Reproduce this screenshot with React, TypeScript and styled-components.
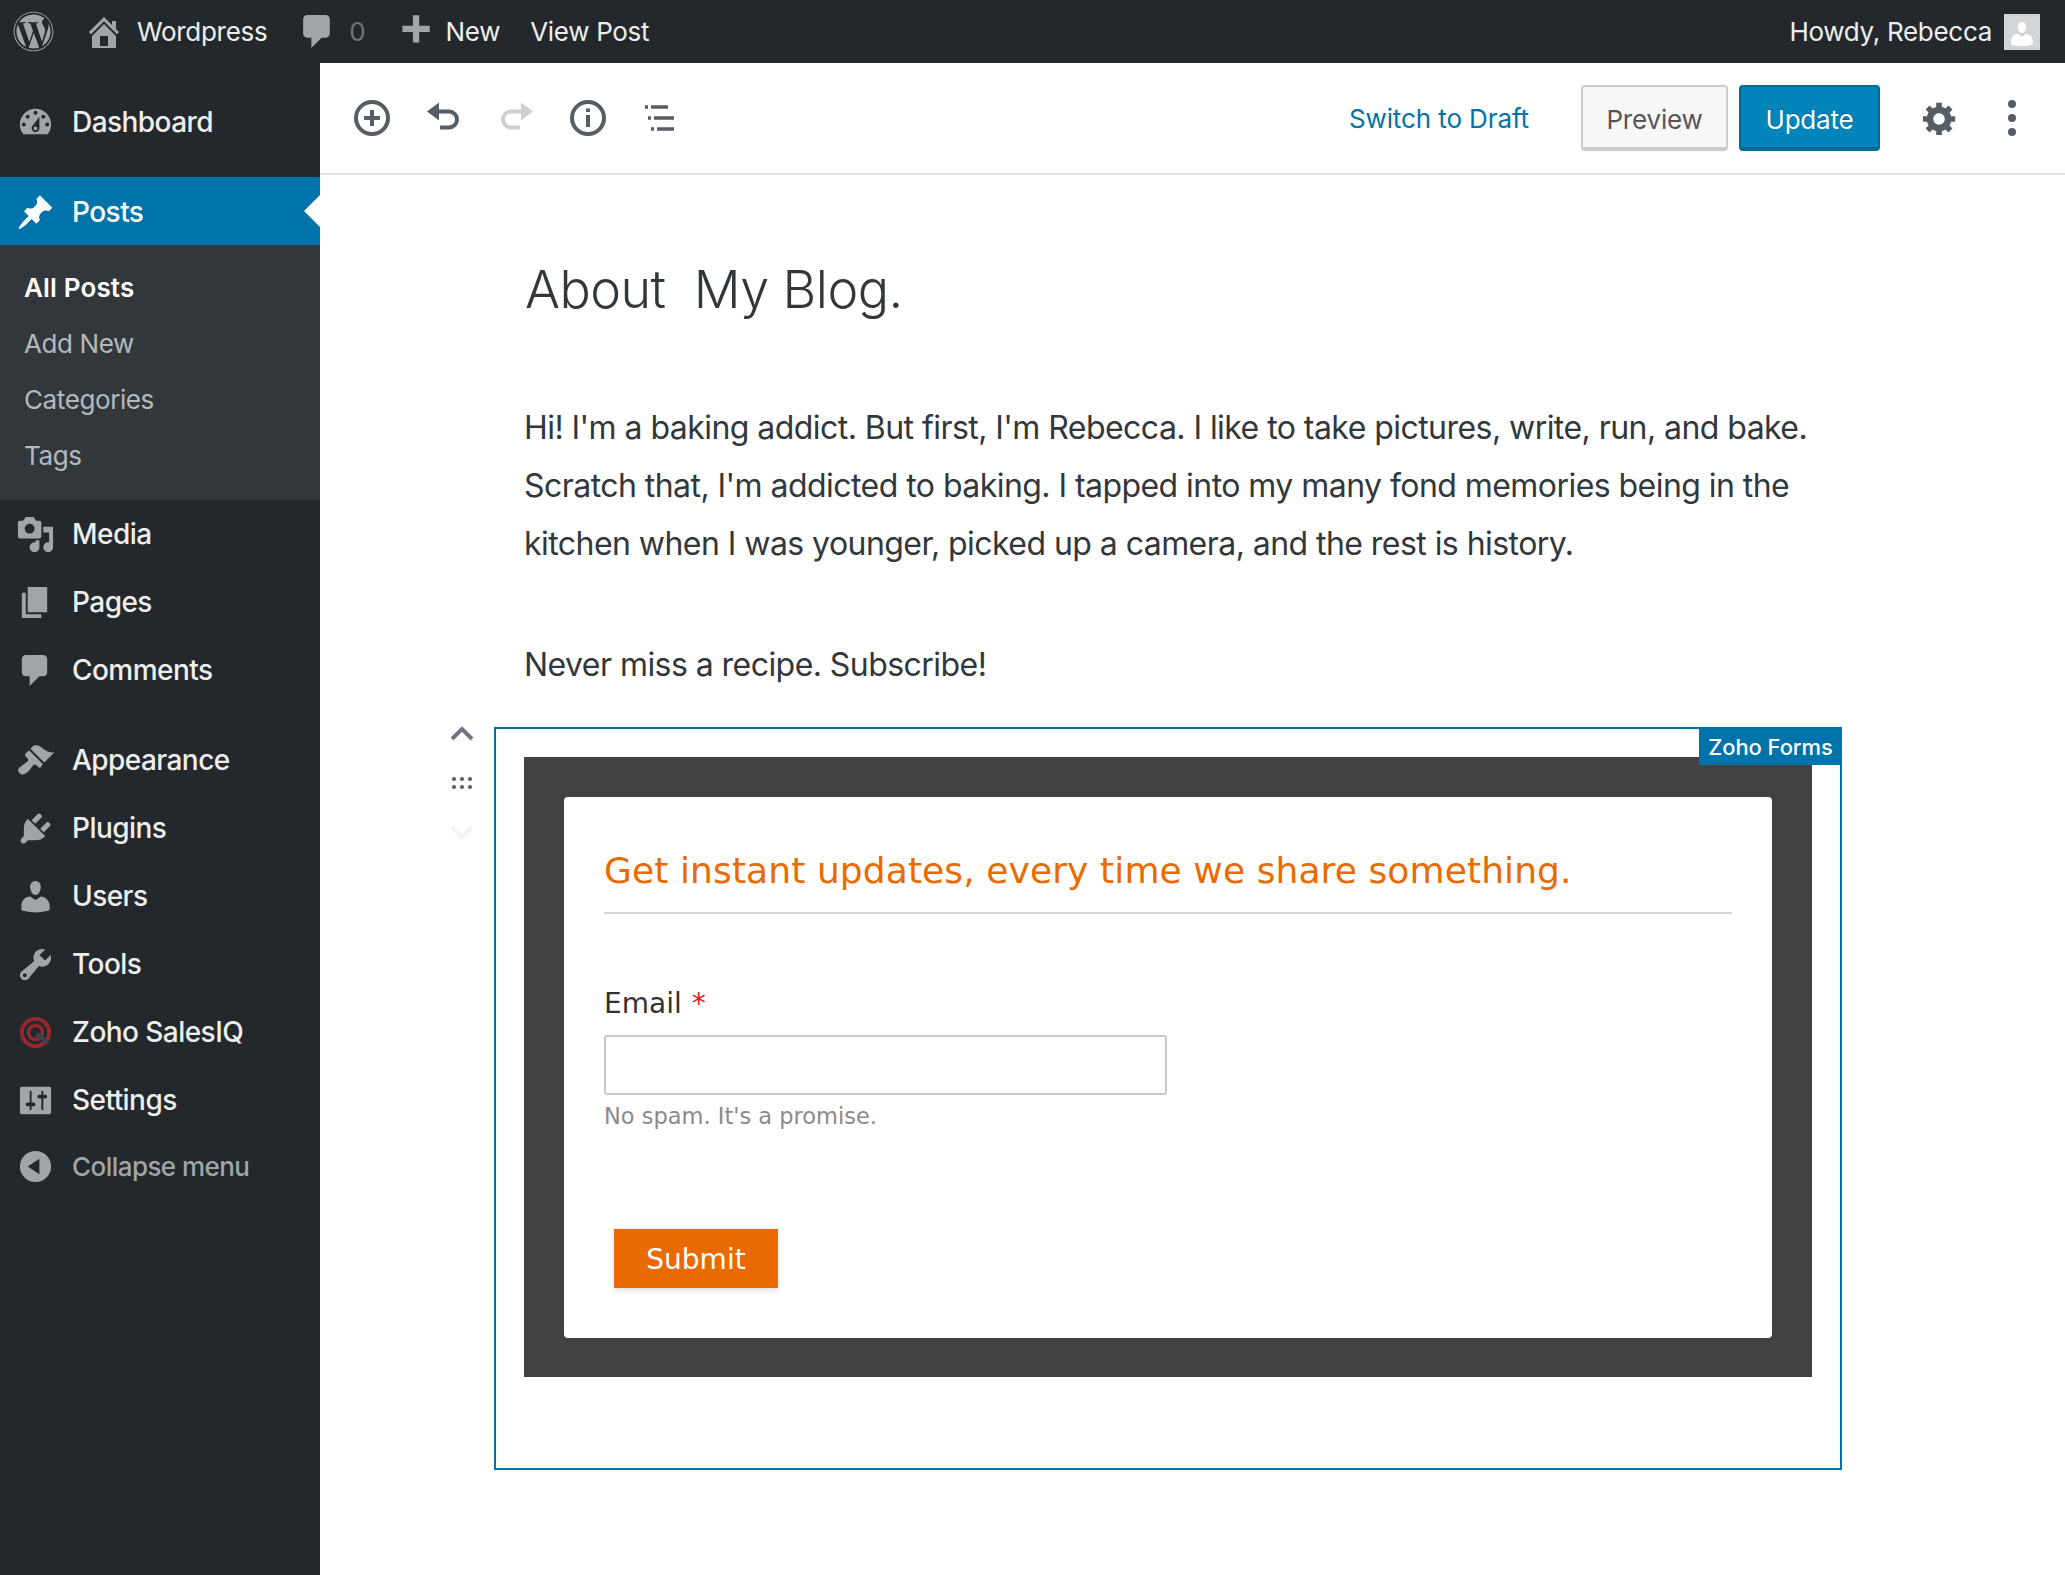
import React, { FC } from 'react';
import styled, { createGlobalStyle } from 'styled-components';
import { FaWordpress } from 'react-icons/fa';

const GlobalStyle = createGlobalStyle`
    html, body {
        margin: 0;
        padding: 0;
        background: #fff;
    }
    body {
        font-family: Inter, "Liberation Sans", sans-serif;
    }
    * {
        box-sizing: border-box;
    }
`;

const dashicons: Record<string, string> = {
    dashboard:
        'M3.76 16h12.48c1.1-1.37 1.76-3.11 1.76-5 0-4.42-3.58-8-8-8s-8 3.58-8 8c0 1.89.66 3.63 1.76 5zM10 4c.55 0 1 .45 1 1s-.45 1-1 1-1-.45-1-1 .45-1 1-1zM6 6c.55 0 1 .45 1 1s-.45 1-1 1-1-.45-1-1 .45-1 1-1zm8 0c.55 0 1 .45 1 1s-.45 1-1 1-1-.45-1-1 .45-1 1-1zm-5.37 5.55L12 7v6c0 1.1-.9 2-2 2s-2-.9-2-2c0-.57.24-1.08.63-1.45zM4 10c.55 0 1 .45 1 1s-.45 1-1 1-1-.45-1-1 .45-1 1-1zm12 0c.55 0 1 .45 1 1s-.45 1-1 1-1-.45-1-1 .45-1 1-1zm-5 3c0-.55-.45-1-1-1s-1 .45-1 1 .45 1 1 1 1-.45 1-1z',
    pin: 'M10.44 3.02l1.82-1.82 6.36 6.35-1.83 1.82c-1.05-.68-2.48-.57-3.41.36l-.75.75c-.92.93-1.04 2.35-.35 3.41l-1.83 1.82-2.41-2.41-2.8 2.79c-.42.42-3.38 2.71-3.8 2.29s1.86-3.39 2.28-3.81l2.79-2.79L4.1 9.36l1.83-1.82c1.05.69 2.48.57 3.4-.36l.75-.75c.93-.92 1.05-2.35.36-3.41z',
    media: 'M13 11V4c0-.55-.45-1-1-1h-1.67L9 1H5L3.67 3H2c-.55 0-1 .45-1 1v7c0 .55.45 1 1 1h10c.55 0 1-.45 1-1zM7 4.5c1.38 0 2.5 1.12 2.5 2.5S8.38 9.5 7 9.5 4.5 8.38 4.5 7 5.62 4.5 7 4.5zM14 6h5v10.5c0 1.38-1.12 2.5-2.5 2.5S14 17.88 14 16.5s1.12-2.5 2.5-2.5c.17 0 .34.02.5.05V9h-3V6zm-4 8.05V13h2v3.5c0 1.38-1.12 2.5-2.5 2.5S7 17.88 7 16.5 8.12 14 9.5 14c.17 0 .34.02.5.05z',
    page: 'M6 15V2h10v13H6zm-1 1h8v2H3V5h2v11z',
    comment: 'M5 2h9c1.1 0 2 .9 2 2v7c0 1.1-.9 2-2 2h-2l-5 5v-5H5c-1.1 0-2-.9-2-2V4c0-1.1.9-2 2-2z',
    appearance:
        'M14.48 11.06L7.41 3.99l1.5-1.5c.5-.56 2.3-.47 3.51.32 1.21.8 1.43 1.28 2.91 2.1 1.18.64 2.45 1.26 4.45.85zm-.71.71L6.7 4.7 4.93 6.47c-.39.39-.39 1.02 0 1.41l1.06 1.06c.39.39.39 1.03 0 1.42-.6.6-1.43 1.11-2.21 1.69-.35.26-.7.53-1.01.84C1.43 13.23.91 14.66 1.25 15.6c.2.55.9 1.27 1.45 1.45.93.34 2.37-.18 3.71-1.52.31-.31.58-.66.84-1.01.58-.78 1.09-1.61 1.69-2.21.39-.39 1.03-.39 1.42 0l1.06 1.06c.39.39 1.02.39 1.41 0z',
    plugin: 'M13.11 4.36L9.87 7.6 8 5.73l3.24-3.24c.35-.34 1.05-.2 1.56.32.52.51.66 1.21.31 1.55zm-8 1.77l.91-1.12 9.01 9.01-1.19.84c-.71.71-2.63 1.16-3.82 1.16H6.14L4.9 17.26c-.59.59-1.54.59-2.12 0-.59-.58-.59-1.53 0-2.12l1.24-1.24v-3.88c0-1.13.4-3.19 1.09-3.89zm7.26 3.97l3.24-3.24c.34-.35 1.04-.21 1.55.31.52.51.66 1.21.31 1.55l-3.24 3.25z',
    users: 'M10 9.25c-2.27 0-2.73-3.44-2.73-3.44C7 4.02 7.82 2 9.97 2c2.16 0 2.98 2.02 2.71 3.81 0 0-.41 3.44-2.68 3.44zm0 2.57L12.72 10c2.39 0 4.52 2.33 4.52 4.53v2.49s-3.65 1.13-7.24 1.13c-3.65 0-7.24-1.13-7.24-1.13v-2.49c0-2.25 1.94-4.48 4.47-4.48z',
    tools: 'M16.68 9.77c-1.34 1.34-3.3 1.67-4.95.99l-5.41 6.52c-.99.99-2.59.99-3.58 0s-.99-2.59 0-3.57l6.52-5.42c-.68-1.65-.35-3.61.99-4.95 1.28-1.28 3.12-1.62 4.72-1.06l-2.89 2.89 2.82 2.82 2.86-2.87c.53 1.58.18 3.39-1.08 4.67zM3.81 16.21c.4.39 1.04.39 1.43 0 .4-.4.4-1.04 0-1.43-.39-.4-1.03-.4-1.43 0-.39.39-.39 1.03 0 1.43z',
    settings:
        'M18 16V4c0-.55-.45-1-1-1H3c-.55 0-1 .45-1 1v12c0 .55.45 1 1 1h14c.55 0 1-.45 1-1zM8 11h1c.55 0 1 .45 1 1s-.45 1-1 1H8v1.5c0 .28-.22.5-.5.5s-.5-.22-.5-.5V13H6c-.55 0-1-.45-1-1s.45-1 1-1h1V5.5c0-.28.22-.5.5-.5s.5.22.5.5V11zm5-2h-1c-.55 0-1-.45-1-1s.45-1 1-1h1V5.5c0-.28.22-.5.5-.5s.5.22.5.5V7h1c.55 0 1 .45 1 1s-.45 1-1 1h-1v5.5c0 .28-.22.5-.5.5s-.5-.22-.5-.5V9z',
    collapse: 'M10 18a8 8 0 1 0 0-16 8 8 0 0 0 0 16zM12 6v8l-6-4z',
    home: 'M16 8.5l1.53 1.53-1.06 1.06L10 4.62l-6.47 6.47-1.06-1.06L10 2.5l4 4v-2h2v4zm-6-2.46l6 5.99V18H4v-5.97zM12 17v-5H8v5h4z',
    plus: 'M17 7v3h-5v5H9v-5H4V7h5V2h3v5h5z',
    gear: 'M18 12h-2.18c-.17.7-.44 1.35-.81 1.93l1.54 1.54-2.1 2.1-1.54-1.54c-.58.36-1.23.63-1.91.79V19H8v-2.18c-.68-.16-1.33-.43-1.91-.79l-1.54 1.54-2.12-2.12 1.54-1.54c-.36-.58-.63-1.23-.79-1.91H1V9.03h2.17c.16-.7.44-1.35.8-1.94L2.43 5.55l2.1-2.1 1.54 1.54c.58-.37 1.24-.64 1.93-.81V2h3v2.18c.68.16 1.33.43 1.91.79l1.54-1.54 2.12 2.12-1.54 1.54c.36.59.64 1.24.8 1.94H18V12zm-8.5 1.5c1.66 0 3-1.34 3-3s-1.34-3-3-3-3 1.34-3 3 1.34 3 3 3z',
};

const Dashicon: FC<{ name: string; size?: number; color?: string }> = ({ name, size = 39, color = 'currentColor' }) => (
    <svg width={size} height={size} viewBox="0 0 20 20" fill={color} style={{ flexShrink: 0 }}>
        <path fillRule="evenodd" d={dashicons[name]} />
    </svg>
);

const SalesIqIcon: FC = () => (
    <svg width={39} height={39} viewBox="0 0 20 20" fill="none" style={{ flexShrink: 0 }}>
        <circle cx="10" cy="10" r="7" stroke="#96282c" strokeWidth="2" />
        <circle cx="10" cy="10" r="3.6" stroke="#96282c" strokeWidth="1.7" />
        <path d="M10.5 10.5l6 5" stroke="#3c4045" strokeWidth="2.4" />
    </svg>
);

const Page = styled.div`
    width: 2065px;
    height: 1575px;
    display: flex;
    flex-direction: column;
    overflow: hidden;
`;

const TopBar = styled.header`
    height: 63px;
    flex-shrink: 0;
    background: #23282d;
    display: flex;
    align-items: center;
    padding: 0 25px 0 13px;
    color: #eee;
    font-size: 26px;
    font-weight: 400;
    letter-spacing: -0.3px;
`;

const BarItem = styled.div<{ $left?: number }>`
    display: flex;
    align-items: center;
    margin-left: ${(p) => p.$left ?? 0}px;
    color: #a0a5aa;
`;

const BarText = styled.span<{ $gap?: number; $muted?: boolean }>`
    margin-left: ${(p) => p.$gap ?? 0}px;
    color: ${(p) => (p.$muted ? '#6f7479' : '#eee')};
`;

const Howdy = styled.div`
    margin-left: auto;
    display: flex;
    align-items: center;
    gap: 12px;
`;

const Avatar = styled.div`
    width: 36px;
    height: 36px;
    background: #d4d5d7;
    display: flex;
    align-items: flex-end;
    justify-content: center;
    overflow: hidden;
`;

const Body = styled.div`
    flex: 1;
    display: flex;
    min-height: 0;
`;

const Sidebar = styled.nav`
    width: 320px;
    flex-shrink: 0;
    background: #23282d;
    padding-top: 25px;
`;

const MenuRow = styled.div<{ $active?: boolean; $faint?: boolean; $gapBelow?: number }>`
    position: relative;
    height: 68px;
    display: flex;
    align-items: center;
    gap: 17px;
    padding-left: 16px;
    padding-top: ${(p) => (p.$active ? 2 : 0)}px;
    margin-bottom: ${(p) => p.$gapBelow ?? 0}px;
    font-size: ${(p) => (p.$faint ? 26 : 28)}px;
    font-weight: 450;
    letter-spacing: -0.55px;
    color: ${(p) => (p.$active ? '#fff' : p.$faint ? '#a0a5aa' : '#eee')};
    background: ${(p) => (p.$active ? '#0073aa' : 'transparent')};

    svg {
        color: ${(p) => (p.$active ? '#fff' : '#a0a5aa')};
    }

    ${(p) =>
        p.$active &&
        `&::after {
            content: '';
            position: absolute;
            right: 0;
            top: 50%;
            margin-top: -16px;
            border: 16px solid transparent;
            border-right-color: #fff;
            border-left-width: 0;
        }`}
`;

const SubMenu = styled.div`
    background: #32373c;
    padding: 14px 0 17px;
`;

const SubItem = styled.div<{ $current?: boolean }>`
    height: 56px;
    display: flex;
    align-items: center;
    padding-left: 24px;
    font-size: 26px;
    letter-spacing: ${(p) => (p.$current ? 0.15 : -0.4)}px;
    font-weight: ${(p) => (p.$current ? 600 : 400)};
    color: ${(p) => (p.$current ? '#fff' : '#b4b9be')};
`;

const Main = styled.main`
    flex: 1;
    min-width: 0;
    background: #fff;
`;

const Toolbar = styled.div`
    height: 112px;
    border-bottom: 2px solid #e2e4e7;
    display: flex;
    align-items: center;
    padding: 0 35px 0 34px;
`;

const ToolIcons = styled.div`
    display: flex;
    align-items: center;
    gap: 36px;
    color: #555d66;
`;

const ToolIcon = styled.svg<{ $disabled?: boolean }>`
    width: 36px;
    height: 36px;
    color: ${(p) => (p.$disabled ? '#ccd0d4' : '#555d66')};
`;

const ToolActions = styled.div`
    margin-left: auto;
    display: flex;
    align-items: center;
`;

const DraftLink = styled.span`
    color: #0073aa;
    font-size: 26px;
    letter-spacing: -0.1px;
    margin-right: 52px;
`;

const Button = styled.div<{ $primary?: boolean }>`
    height: 66px;
    display: flex;
    align-items: center;
    justify-content: center;
    padding-top: 5px;
    border-radius: 4px;
    font-size: 26px;
    letter-spacing: -0.2px;
    width: ${(p) => (p.$primary ? 141 : 147)}px;
    margin-right: ${(p) => (p.$primary ? 41 : 11)}px;
    color: ${(p) => (p.$primary ? '#fff' : '#555')};
    background: ${(p) => (p.$primary ? '#0085ba' : '#f7f7f7')};
    border: 2px solid ${(p) => (p.$primary ? '#006a95' : '#ccc')};
    border-bottom-width: 4px;
    text-shadow: ${(p) => (p.$primary ? '0 -1px 1px #006799' : 'none')};
`;

const KebabGap = styled.div`
    margin-left: 35px;
    display: flex;
`;

const Content = styled.div`
    padding-top: 80px;
`;

const Title = styled.h1`
    margin: 0 0 74px 205px;
    font-size: 52px;
    line-height: 70px;
    font-weight: 300;
    color: #32373c;
    letter-spacing: -0.55px;
    white-space: pre-wrap;
`;

const Paragraph = styled.p<{ $after?: number }>`
    margin: 0 0 ${(p) => p.$after ?? 0}px 204px;
    width: 1300px;
    font-size: 32px;
    line-height: 58px;
    font-weight: 400;
    color: #32373c;
    letter-spacing: -0.55px;
`;

const BlockRow = styled.div`
    display: flex;
    margin-left: 122px;
    gap: 12px;
`;

const Mover = styled.div`
    width: 40px;
    margin-top: -19px;
    display: flex;
    flex-direction: column;
`;

const MoverSlot = styled.div`
    height: 50px;
    display: flex;
    align-items: center;
    justify-content: center;
`;

const Block = styled.section`
    position: relative;
    width: 1348px;
    height: 743px;
    border: 2px solid #0073aa;
    padding: 28px;
`;

const BlockTag = styled.div`
    position: absolute;
    top: -2px;
    right: -2px;
    height: 38px;
    width: 143px;
    padding-top: 1px;
    background: #0073aa;
    color: #fff;
    font-size: 22px;
    font-weight: 500;
    letter-spacing: -0.1px;
    display: flex;
    align-items: center;
    justify-content: center;
`;

const FormFrame = styled.div`
    height: 620px;
    width: 1288px;
    background: #424242;
    padding: 40px;
`;

const FormCard = styled.div`
    height: 541px;
    background: #fff;
    border-radius: 4px;
    padding: 40px;
    font-family: "DejaVu Sans", Verdana, sans-serif;
`;

const FormHeading = styled.h2`
    margin: 0;
    height: 77px;
    line-height: 68px;
    font-size: 36px;
    letter-spacing: 0.1px;
    font-weight: 400;
    color: #e96b00;
    border-bottom: 2px solid #d6d6d6;
`;

const FieldLabel = styled.label`
    display: block;
    margin-top: 70px;
    line-height: 40px;
    font-size: 28px;
    color: #333;
`;

const Required = styled.span`
    color: #e02020;
    margin-left: 10px;
`;

const EmailInput = styled.div`
    margin-top: 11px;
    width: 563px;
    height: 60px;
    background: #fff;
    border: 2px solid #c9c9c9;
    border-radius: 3px;
`;

const Help = styled.div`
    margin-top: 6px;
    line-height: 30px;
    font-size: 22.5px;
    color: #8a8a8a;
`;

const Submit = styled.div`
    margin: 98px 0 0 10px;
    width: 164px;
    height: 59px;
    padding-top: 2px;
    background: #e96b00;
    color: #fff;
    font-size: 28px;
    display: flex;
    align-items: center;
    justify-content: center;
    box-shadow: 0 3px 6px rgba(0, 0, 0, 0.12);
`;

const menuTop = [
    { icon: 'media', label: 'Media' },
    { icon: 'page', label: 'Pages' },
    { icon: 'comment', label: 'Comments', gapBelow: 22 },
    { icon: 'appearance', label: 'Appearance' },
    { icon: 'plugin', label: 'Plugins' },
    { icon: 'users', label: 'Users' },
    { icon: 'tools', label: 'Tools' },
];

const App: FC = () => {
    return (
        <Page>
            <GlobalStyle />
            <TopBar>
                <BarItem>
                    <FaWordpress size={41} />
                </BarItem>
                <BarItem $left={30}>
                    <Dashicon name="home" size={40} />
                    <BarText $gap={13}>Wordpress</BarText>
                </BarItem>
                <BarItem $left={30}>
                    <Dashicon name="comment" size={41} />
                    <BarText $gap={11} $muted>0</BarText>
                </BarItem>
                <BarItem $left={29}>
                    <Dashicon name="plus" size={42} />
                    <BarText $gap={9}>New</BarText>
                </BarItem>
                <BarItem $left={30}>
                    <BarText>View Post</BarText>
                </BarItem>
                <Howdy>
                    <BarText>Howdy, Rebecca</BarText>
                    <Avatar>
                        <svg width="30" height="32" viewBox="0 0 20 20" fill="#fff">
                            <path d={dashicons.users} />
                        </svg>
                    </Avatar>
                </Howdy>
            </TopBar>
            <Body>
                <Sidebar>
                    <MenuRow $gapBelow={21}>
                        <Dashicon name="dashboard" />
                        Dashboard
                    </MenuRow>
                    <MenuRow $active>
                        <Dashicon name="pin" />
                        Posts
                    </MenuRow>
                    <SubMenu>
                        <SubItem $current>All Posts</SubItem>
                        <SubItem>Add New</SubItem>
                        <SubItem>Categories</SubItem>
                        <SubItem>Tags</SubItem>
                    </SubMenu>
                    {menuTop.map((item) => (
                        <MenuRow key={item.label} $gapBelow={item.gapBelow}>
                            <Dashicon name={item.icon} />
                            {item.label}
                        </MenuRow>
                    ))}
                    <MenuRow>
                        <SalesIqIcon />
                        Zoho SalesIQ
                    </MenuRow>
                    <MenuRow $gapBelow={-2}>
                        <Dashicon name="settings" />
                        Settings
                    </MenuRow>
                    <MenuRow $faint>
                        <Dashicon name="collapse" />
                        Collapse menu
                    </MenuRow>
                </Sidebar>
                <Main>
                    <Toolbar>
                        <ToolIcons>
                            <ToolIcon viewBox="0 0 36 36" fill="none" stroke="currentColor" strokeWidth="4">
                                <circle cx="18" cy="18" r="16" />
                                <path d="M18 10v16M10 18h16" />
                            </ToolIcon>
                            <ToolIcon viewBox="0 0 36 36" fill="none" stroke="currentColor" strokeWidth="4">
                                <path d="M10 11.5h13a8 8 0 0 1 0 16h-9" />
                                <path d="M13 2.5v18L1 11.5z" fill="currentColor" stroke="none" />
                            </ToolIcon>
                            <ToolIcon $disabled viewBox="0 0 36 36" fill="none" stroke="currentColor" strokeWidth="4">
                                <path d="M26 11.5H13a8 8 0 0 0 0 16h9" />
                                <path d="M23 2.5v18l12-9z" fill="currentColor" stroke="none" />
                            </ToolIcon>
                            <ToolIcon viewBox="0 0 36 36" fill="none" stroke="currentColor" strokeWidth="4">
                                <circle cx="18" cy="18" r="16" />
                                <path d="M18 15v12" />
                                <path d="M18 8.5v3.5" />
                            </ToolIcon>
                            <ToolIcon viewBox="0 0 36 36" fill="none" stroke="currentColor" strokeWidth="3.5">
                                <path d="M3 7h3M9 7h17M6 18h3M12 18h20M9 29h3M15 29h17" />
                            </ToolIcon>
                        </ToolIcons>
                        <ToolActions>
                            <DraftLink>Switch to Draft</DraftLink>
                            <Button>Preview</Button>
                            <Button $primary>Update</Button>
                            <Dashicon name="gear" size={38} color="#555d66" />
                            <KebabGap>
                                <ToolIcon viewBox="0 0 36 36" fill="currentColor">
                                    <circle cx="18" cy="4" r="4" />
                                    <circle cx="18" cy="18" r="4" />
                                    <circle cx="18" cy="32" r="4" />
                                </ToolIcon>
                            </KebabGap>
                        </ToolActions>
                    </Toolbar>
                    <Content>
                        <Title>About  My Blog.</Title>
                        <Paragraph $after={63}>
                            Hi! I'm a baking addict. But first, I'm Rebecca. I like to take pictures, write, run, and bake.
                            Scratch that, I'm addicted to baking. I tapped into my many fond memories being in the kitchen
                            when I was younger, picked up a camera, and the rest is history.
                        </Paragraph>
                        <Paragraph $after={33}>Never miss a recipe. Subscribe!</Paragraph>
                        <BlockRow>
                            <Mover>
                                <MoverSlot>
                                    <svg width="26" height="18" viewBox="0 0 26 18" fill="none" stroke="#6c7781" strokeWidth="4">
                                        <path d="M3 15l10-10 10 10" />
                                    </svg>
                                </MoverSlot>
                                <MoverSlot>
                                    <svg width="22" height="14" viewBox="0 0 22 14" fill="#555d66">
                                        <circle cx="3" cy="3" r="2" />
                                        <circle cx="11" cy="3" r="2" />
                                        <circle cx="19" cy="3" r="2" />
                                        <circle cx="3" cy="11" r="2" />
                                        <circle cx="11" cy="11" r="2" />
                                        <circle cx="19" cy="11" r="2" />
                                    </svg>
                                </MoverSlot>
                                <MoverSlot>
                                    <svg width="26" height="18" viewBox="0 0 26 18" fill="none" stroke="#f1f4f4" strokeWidth="4">
                                        <path d="M3 3l10 10 10-10" />
                                    </svg>
                                </MoverSlot>
                            </Mover>
                            <Block>
                                <BlockTag>Zoho Forms</BlockTag>
                                <FormFrame>
                                    <FormCard>
                                        <FormHeading>Get instant updates, every time we share something.</FormHeading>
                                        <FieldLabel>
                                            Email<Required>*</Required>
                                        </FieldLabel>
                                        <EmailInput />
                                        <Help>No spam. It's a promise.</Help>
                                        <Submit>Submit</Submit>
                                    </FormCard>
                                </FormFrame>
                            </Block>
                        </BlockRow>
                    </Content>
                </Main>
            </Body>
        </Page>
    );
};

export default App;
